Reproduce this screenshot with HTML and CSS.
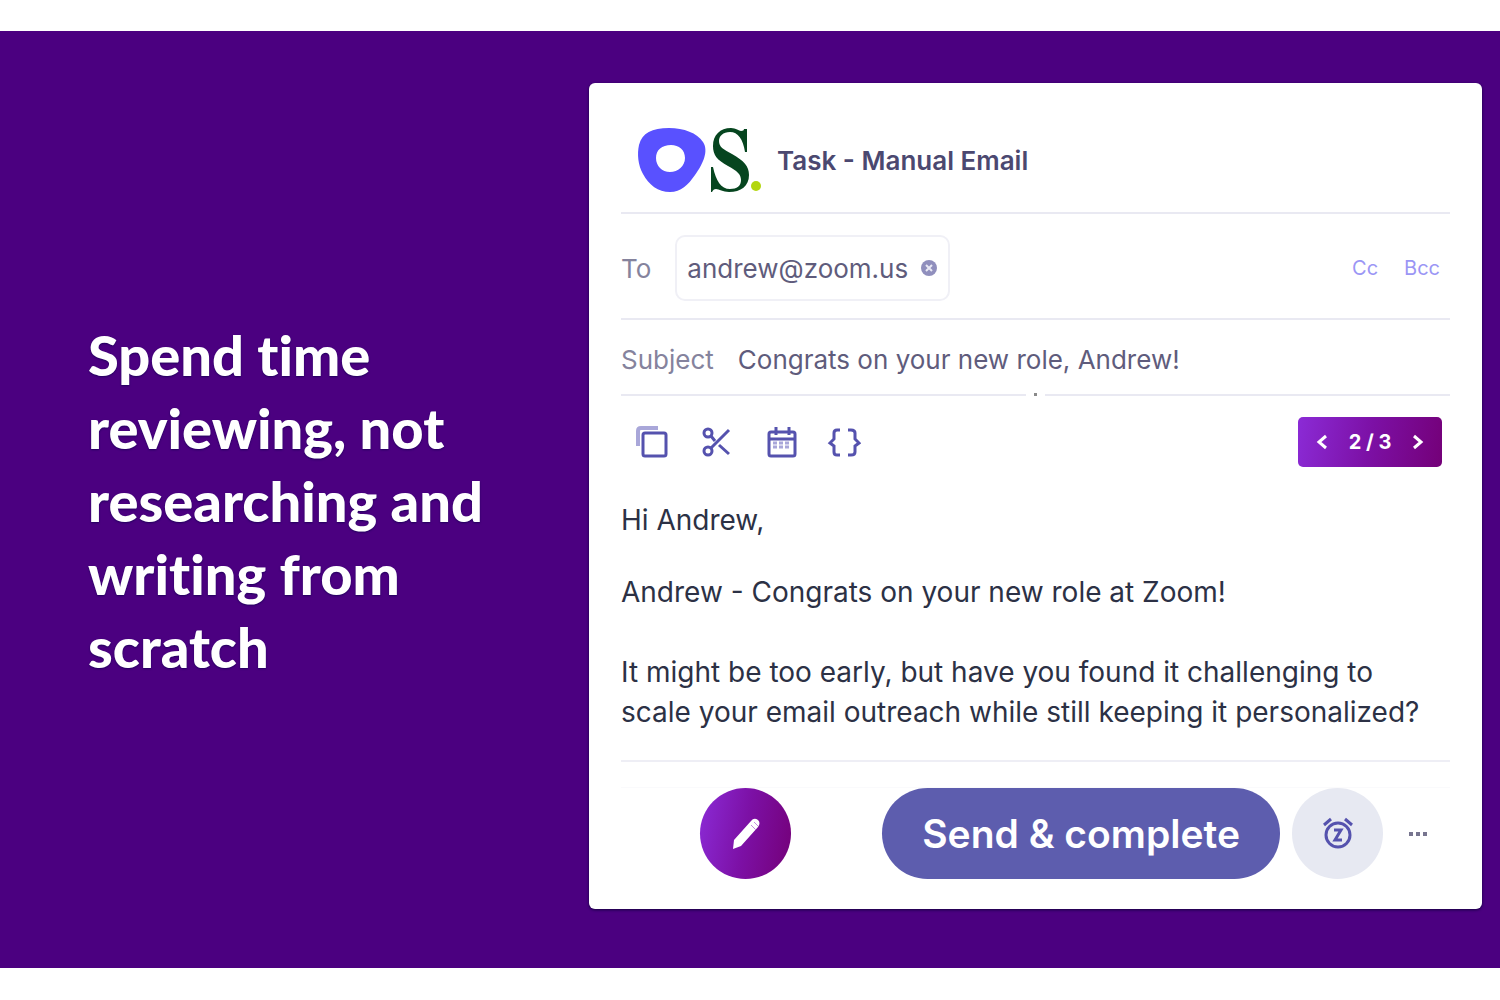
FILE: index.html
```
<!DOCTYPE html>
<html lang="en">
  <head>
    <meta charset="UTF-8" />
    <meta name="viewport" content="width=device-width, initial-scale=1.0" />
    <title>Task - Manual Email</title>
    <link rel="stylesheet" href="styles.css">
  </head>
  <body>
    <main class="stage">
      <h1 class="headline">Spend time<br>reviewing, not<br>researching and<br>writing from<br>scratch</h1>

      <form class="card">
        <header class="card-header">
          <svg class="logos" width="128" height="66" viewBox="0 0 128 66" aria-hidden="true">
            <path fill="#5951ff" fill-rule="evenodd" d="M32 1C47 1 60 6 66 15C72 24 66 37 58 48C51 58 44 65 33 65C21 65 12 58 6 47C1 38 0 27 2 18C5 6 15 1 32 1ZM34 18C25 18 19 23 19 31C19 39 25 45 33 45C41 45 48 39 48 31C48 23 42 18 34 18Z" />
            <path fill="#06451f" d="M107 2H110V25H108C106 12 101 5 93 5C86 5 82 9 82 14C82 20 86 22 95 27C107 34 112 39 112 48C112 59 104 65 92 65C86 65 82 62 79 62C77 62 76 63 75 65H74V40H76C79 54 84 62 93 62C100 62 104 59 104 53C104 47 100 44 91 39C80 33 76 28 76 19C76 8 83 1 94 1C99 1 102 4 104 4C106 4 107 3 107 2Z" />
            <circle cx="119" cy="59" r="5" fill="#b3d60f" />
          </svg>
          <h2 class="task-title">Task - Manual Email</h2>
        </header>

        <div class="row to-row">
          <span class="label">To</span>
          <span class="chip">
            andrew@zoom.us
            <button type="button" class="chip-remove" aria-label="Remove andrew@zoom.us">
              <svg width="18" height="18" viewBox="0 0 18 18"><circle cx="9" cy="9" r="8" fill="#908fbd" /><path d="M6 6l6 6M12 6l-6 6" stroke="#e9e9f5" stroke-width="2" /></svg>
            </button>
          </span>
          <div class="copy-links">
            <button type="button">Cc</button>
            <button type="button">Bcc</button>
          </div>
        </div>

        <div class="row subject-row">
          <label class="label" for="subject">Subject</label>
          <input class="subject-input" id="subject" type="text" value="Congrats on your new role, Andrew!">
        </div>

        <div class="toolbar">
          <button type="button" class="tool" aria-label="Copy">
            <svg width="34" height="34" viewBox="0 0 34 34"><path d="M3 21V6Q3 3 6 3H23" stroke="#a9a7d9" stroke-width="4" /><rect x="8" y="8" width="23" height="23" rx="2" /></svg>
          </button>
          <button type="button" class="tool" aria-label="Cut">
            <svg width="34" height="34" viewBox="0 0 34 34"><circle cx="9" cy="8" r="4" /><circle cx="9" cy="26" r="4" /><path d="M12 11L16 16M12 23L30 5M20 20L30 29" /></svg>
          </button>
          <button type="button" class="tool" aria-label="Schedule">
            <svg width="34" height="34" viewBox="0 0 34 34"><rect x="6" y="7" width="26" height="24" rx="2" /><path d="M6 14H32M13 2V10M26 2V10" /><path d="M10 18H28M10 22H28" stroke="#a9a7d9" stroke-dasharray="4 2" /></svg>
          </button>
          <button type="button" class="tool" aria-label="Variables">
            <svg width="34" height="34" viewBox="0 0 34 34"><path d="M13 5H10Q7 5 7 8V14L3 18L7 21V27Q7 30 10 30H13M21 5H24Q28 5 28 8V14L32 18L28 21V27Q28 30 24 30H21" /></svg>
          </button>
          <div class="pager">
            <button type="button" aria-label="Previous"><svg width="12" height="16" viewBox="0 0 12 16"><path d="M10 2L3 8L10 14" /></svg></button>
            <span>2 / 3</span>
            <button type="button" aria-label="Next"><svg width="12" height="16" viewBox="0 0 12 16"><path d="M2 2L9 8L2 14" /></svg></button>
          </div>
        </div>

        <div class="message" role="textbox" aria-label="Message" contenteditable="true" spellcheck="false">
          <p class="greeting">Hi Andrew,</p>
          <p>Andrew - Congrats on your new role at Zoom!</p>
          <p>It might be too early, but have you found it challenging to scale your email outreach while still keeping it personalized?</p>
        </div>

        <footer class="actions">
          <button type="button" class="round edit" aria-label="Edit">
            <svg width="32" height="36" viewBox="0 0 32 36"><path fill="#fff" d="M3 33L4 24L21 5Q24 1 28 4Q31 7 28 11L11 30Z" /><path d="M21 9L26 14M24 6L28 10" stroke="#c48be0" stroke-width="1" /></svg>
          </button>
          <button type="submit" class="send">Send &amp; complete</button>
          <button type="button" class="round snooze" aria-label="Snooze">
            <svg width="34" height="36" viewBox="0 0 34 36"><circle cx="17" cy="19" r="12" /><path d="M3 9L10 3M31 9L24 3M13 14H20L14 24H21" /></svg>
          </button>
          <button type="button" class="more" aria-label="More">
            <svg width="20" height="6" viewBox="0 0 20 6"><path fill="#77758f" d="M1 1h4v4h-4zM8 1h4v4h-4zM15 1h4v4h-4z" /></svg>
          </button>
        </footer>
      </form>
    </main>
  </body>
</html>
```
FILE: styles.css
```
* {
  box-sizing: border-box;
}

body {
  margin: 0;
  min-height: 100vh;
  padding: 31px 0 32px;
  display: flex;
  background-color: #ffffff;
  font-family: Inter, "Liberation Sans", sans-serif;
}

button {
  padding: 0;
  border: 0;
  background: none;
  font-family: inherit;
  cursor: pointer;
}

svg {
  display: block;
  fill: none;
}

h1,
h2,
p {
  margin: 0;
}

.stage {
  flex: 1;
  display: grid;
  grid-template-columns: 501fr 893fr;
  align-items: center;
  padding: 52px 18px 59px 88px;
  background-color: #4b0080;
}

.headline {
  padding-top: 8px;
  color: #ffffff;
  font-family: Lato, sans-serif;
  font-size: 56px;
  font-weight: 900;
  line-height: 73px;
  font-variant-ligatures: none;
  text-shadow: 0 1px 2px #20005c;
}

.card {
  padding: 44px 32px 30px;
  background-color: #ffffff;
  border-radius: 6px;
  box-shadow: 0 1px 3px #130040;
}

.card-header {
  display: flex;
  align-items: center;
  gap: 12px;
  padding: 0 0 19px 16px;
  border-bottom: 2px solid #e9e9f2;
}

.task-title {
  color: #4b4870;
  font-size: 26px;
  font-weight: 600;
}

.row {
  display: flex;
  align-items: center;
  gap: 24px;
  padding-top: 4px;
  border-bottom: 2px solid #e9e9f2;
  font-size: 26px;
}

.label {
  color: #85839d;
}

.to-row {
  height: 106px;
}

.chip {
  display: flex;
  align-items: center;
  gap: 12px;
  height: 66px;
  padding: 0 10px;
  border: 2px solid #f0f0f6;
  border-radius: 10px;
  color: #5f5c7c;
}

.copy-links {
  display: flex;
  gap: 26px;
  margin-left: auto;
  padding-right: 10px;
}

.copy-links button {
  color: #9b96f5;
  font-size: 20px;
}

.subject-row {
  position: relative;
  height: 76px;
}

.subject-row::after {
  content: "";
  position: absolute;
  bottom: -2px;
  left: 50%;
  width: 3px;
  height: 3px;
  margin-left: -2px;
  background-color: #8a8a8a;
  box-shadow: 0 0 0 8px #ffffff;
}

.subject-input {
  flex: 1;
  min-width: 0;
  padding: 0;
  border: 0;
  outline: 0;
  color: #5f5c7c;
  font-family: inherit;
  font-size: 26px;
}

.toolbar {
  display: flex;
  align-items: center;
  gap: 30px;
  padding: 21px 8px 33px 14px;
}

.tool svg {
  stroke: #5552ae;
  stroke-width: 3;
}

.pager {
  display: flex;
  align-items: center;
  justify-content: space-between;
  width: 144px;
  height: 50px;
  margin-left: auto;
  padding: 0 18px;
  border-radius: 5px;
  background: linear-gradient(100deg, #8b2bd6, #7c10a5 50%, #740078);
  color: #ffffff;
  font-size: 20px;
  font-weight: 700;
}

.pager svg {
  stroke: #ffffff;
  stroke-width: 3;
}

.message {
  padding: 0 12px 28px 0;
  border-bottom: 2px solid #eeeef5;
  outline: 0;
  color: #2c3145;
  font-size: 28px;
  line-height: 40px;
}

.message p + p {
  margin-top: 40px;
}

.message .greeting + p {
  margin-top: 32px;
}

.actions {
  display: flex;
  align-items: center;
  gap: 12px;
  margin-top: 25px;
  padding: 0 22px 0 79px;
  border-top: 1px solid #fafafc;
}

.round {
  display: flex;
  align-items: center;
  justify-content: center;
  width: 91px;
  height: 91px;
  border-radius: 50%;
}

.edit {
  background: linear-gradient(100deg, #8b2bd6, #7c10a5 50%, #740078);
}

.send {
  height: 91px;
  margin-left: auto;
  padding: 0 40px;
  border-radius: 46px;
  background-color: #5d5dae;
  color: #ffffff;
  font-size: 39px;
  font-weight: 600;
}

.snooze {
  background-color: #e7e9f2;
}

.snooze svg {
  stroke: #5552ae;
  stroke-width: 3;
}

.more {
  padding: 12px 0 12px 13px;
}
```
